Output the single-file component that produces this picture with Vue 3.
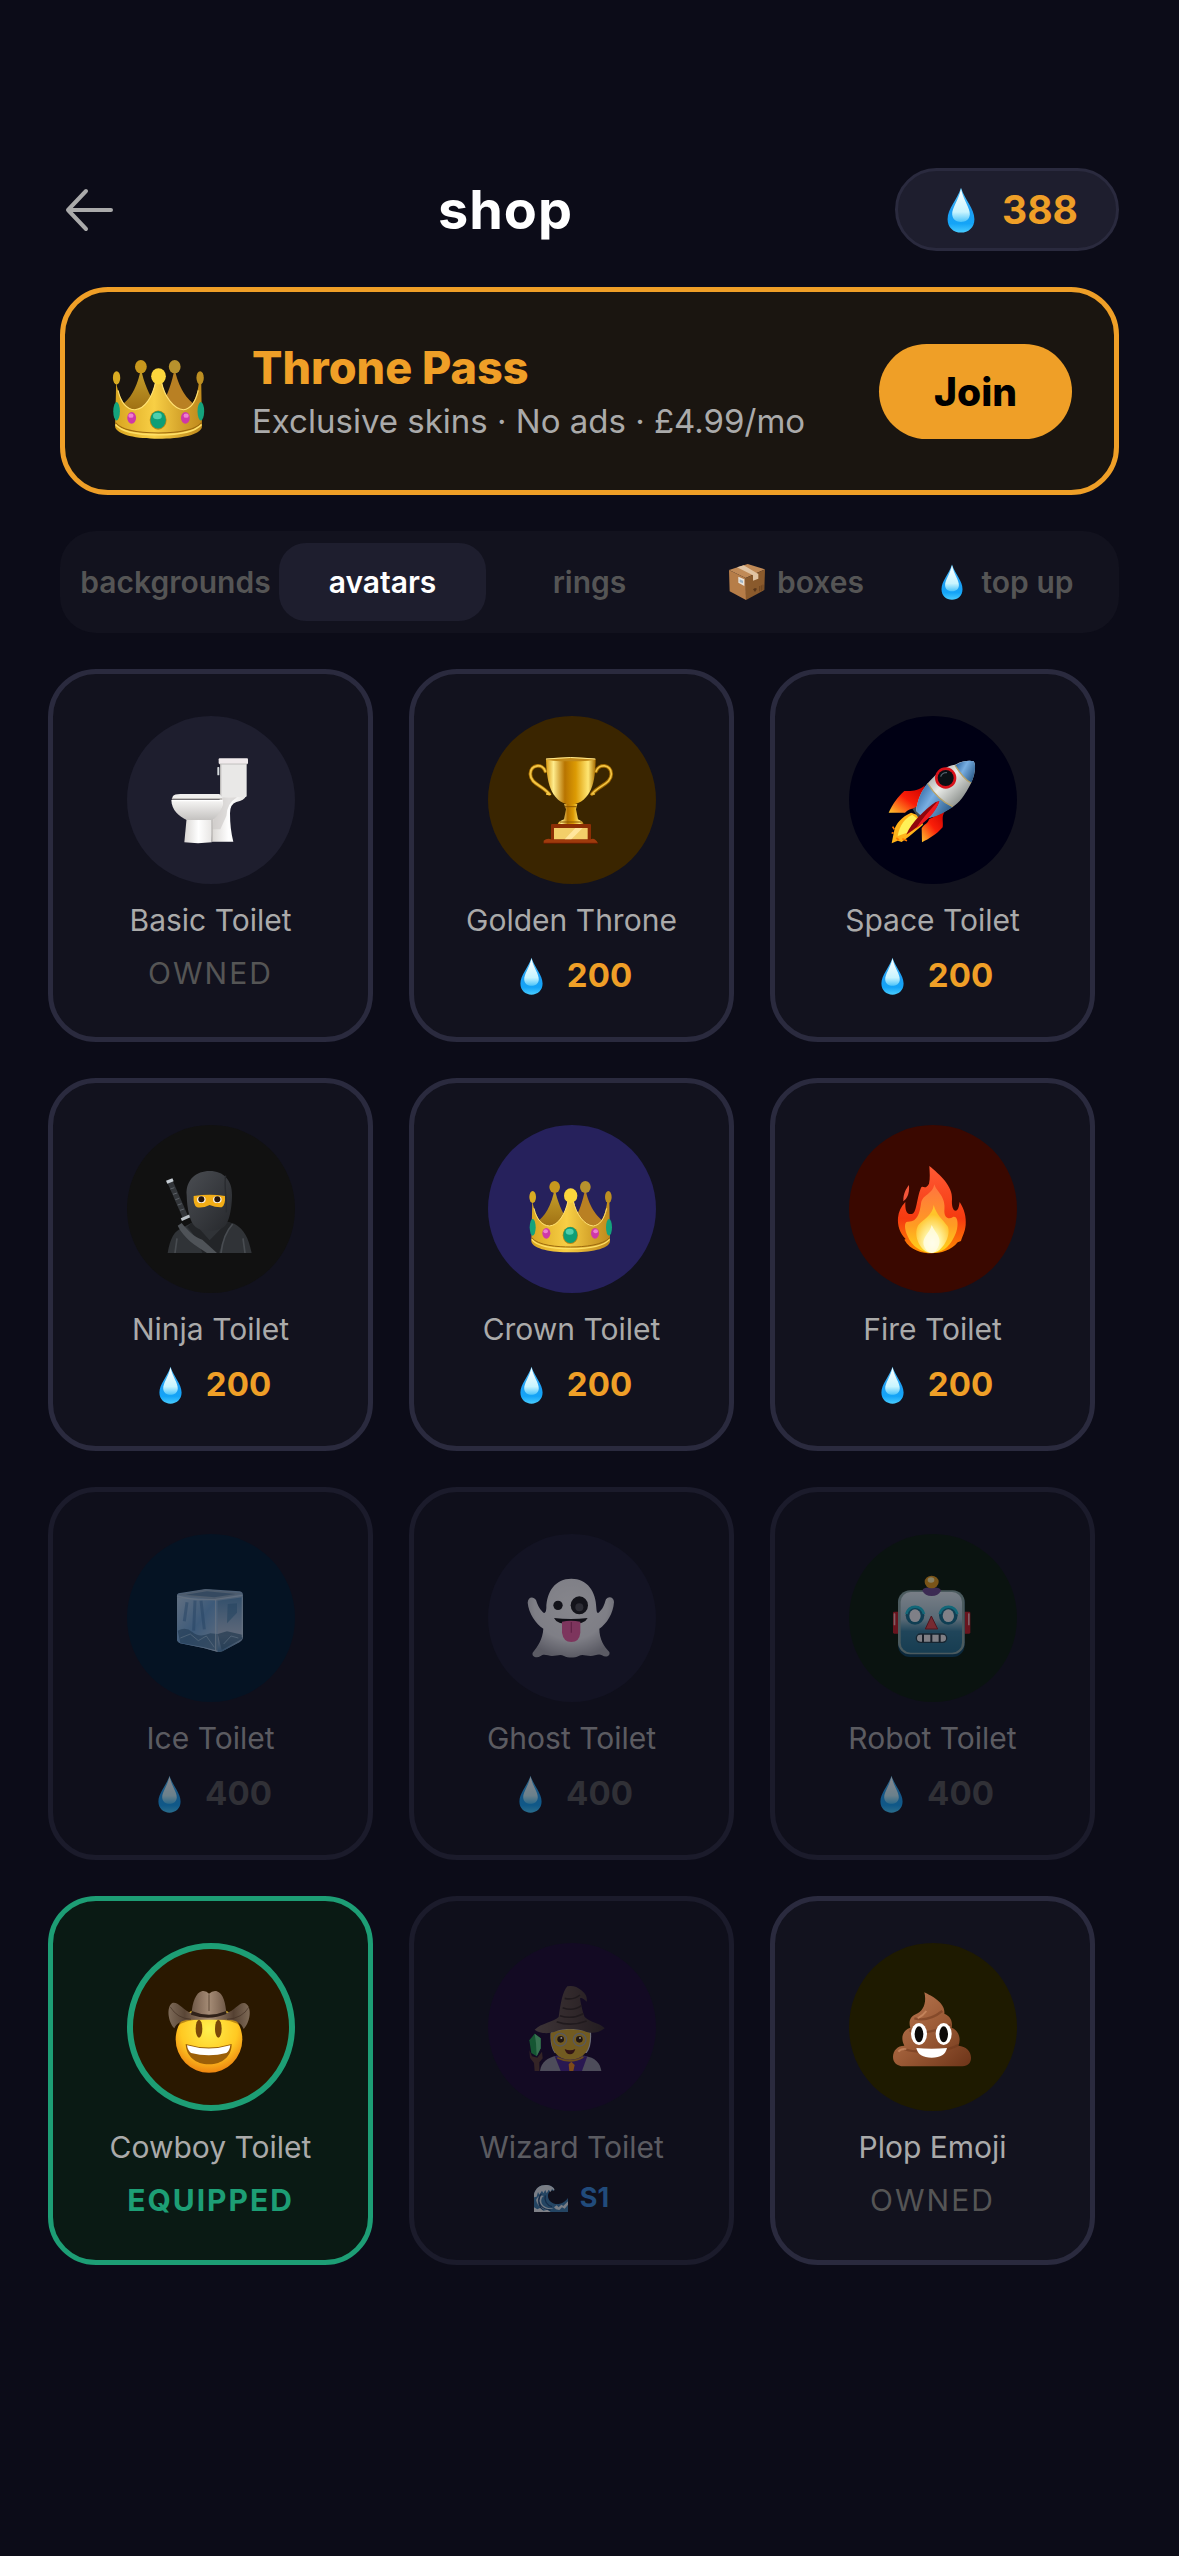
<template>
  <svg class="sprite" width="0" height="0" aria-hidden="true">
    <defs>
      <linearGradient id="gold" x1="0" x2="1" y1="0" y2="0">
        <stop offset="0" stop-color="#d9a520" />
        <stop offset="0.45" stop-color="#f8cf45" />
        <stop offset="0.75" stop-color="#d6a52c" />
        <stop offset="1" stop-color="#c08a1c" />
      </linearGradient>
      <linearGradient id="gold-back" x1="0" x2="0" y1="0" y2="1">
        <stop offset="0" stop-color="#c9a32c" />
        <stop offset="1" stop-color="#96650e" />
      </linearGradient>
      <linearGradient id="cup" x1="0" x2="1" y1="0" y2="0">
        <stop offset="0" stop-color="#d99a12" />
        <stop offset="0.15" stop-color="#ffec8c" />
        <stop offset="0.38" stop-color="#b87400" />
        <stop offset="0.6" stop-color="#dc9b04" />
        <stop offset="0.85" stop-color="#ffe673" />
        <stop offset="1" stop-color="#a86c00" />
      </linearGradient>
      <linearGradient id="china" x1="0" x2="0" y1="0" y2="1">
        <stop offset="0" stop-color="#f7f6f5" />
        <stop offset="1" stop-color="#c4c2c0" />
      </linearGradient>
      <linearGradient id="china-side" x1="0" x2="1" y1="0" y2="0">
        <stop offset="0" stop-color="#d9d6d3" />
        <stop offset="0.5" stop-color="#ffffff" />
        <stop offset="1" stop-color="#e6e4e2" />
      </linearGradient>
      <linearGradient id="hull" x1="0.2" x2="0.8" y1="0.2" y2="0.8">
        <stop offset="0" stop-color="#9a9c9a" />
        <stop offset="0.4" stop-color="#e9ebe8" />
        <stop offset="1" stop-color="#777c78" />
      </linearGradient>
      <linearGradient id="hull-blue" x1="0" x2="1" y1="0.2" y2="0.8">
        <stop offset="0" stop-color="#2c639e" />
        <stop offset="0.4" stop-color="#78aee2" />
        <stop offset="1" stop-color="#255482" />
      </linearGradient>
      <linearGradient id="fin" x1="1" x2="0" y1="0" y2="1">
        <stop offset="0" stop-color="#c80000" />
        <stop offset="0.5" stop-color="#fa1e08" />
        <stop offset="1" stop-color="#ffc62e" />
      </linearGradient>
      <linearGradient id="hood" x1="0" x2="1" y1="0" y2="1">
        <stop offset="0" stop-color="#4a4d52" />
        <stop offset="1" stop-color="#26282c" />
      </linearGradient>
      <linearGradient id="fire-outer" x1="0" x2="0" y1="0" y2="1">
        <stop offset="0" stop-color="#ff5a35" />
        <stop offset="0.6" stop-color="#f53a10" />
        <stop offset="1" stop-color="#ff8c00" />
      </linearGradient>
      <linearGradient id="fire-mid" x1="0" x2="0" y1="0" y2="1">
        <stop offset="0" stop-color="#ff7440" />
        <stop offset="0.6" stop-color="#ff9c22" />
        <stop offset="1" stop-color="#ffd61a" />
      </linearGradient>
      <radialGradient id="fire-core" cx="0.5" cy="0.8" r="0.6">
        <stop offset="0" stop-color="#ffffff" />
        <stop offset="0.4" stop-color="#fff6a8" />
        <stop offset="1" stop-color="#ffc42a" />
      </radialGradient>
      <linearGradient id="ice-left" x1="0" x2="1" y1="0" y2="1">
        <stop offset="0" stop-color="#b4d2ea" />
        <stop offset="0.5" stop-color="#6ea7da" />
        <stop offset="1" stop-color="#b8d0e6" />
      </linearGradient>
      <linearGradient id="ice-right" x1="0" x2="0" y1="0" y2="1">
        <stop offset="0" stop-color="#5b93bf" />
        <stop offset="0.7" stop-color="#b2c6dc" />
        <stop offset="1" stop-color="#4b83ae" />
      </linearGradient>
      <radialGradient id="sheet" cx="0.5" cy="0.35" r="0.65">
        <stop offset="0" stop-color="#ffffff" />
        <stop offset="0.65" stop-color="#f1f1f4" />
        <stop offset="1" stop-color="#a9a9b0" />
      </radialGradient>
      <linearGradient id="steel" x1="0" x2="0" y1="0" y2="1">
        <stop offset="0" stop-color="#e4f0f4" />
        <stop offset="0.45" stop-color="#a5c5d0" />
        <stop offset="0.65" stop-color="#347f9c" />
        <stop offset="1" stop-color="#236f8c" />
      </linearGradient>
      <radialGradient id="smiley" cx="0.5" cy="0.35" r="0.65">
        <stop offset="0" stop-color="#fff04e" />
        <stop offset="0.65" stop-color="#ffc922" />
        <stop offset="1" stop-color="#ee8510" />
      </radialGradient>
      <linearGradient id="felt" x1="0" x2="1" y1="0" y2="0">
        <stop offset="0" stop-color="#7d6a58" />
        <stop offset="0.2" stop-color="#5a4636" />
        <stop offset="0.4" stop-color="#8d7460" />
        <stop offset="0.5" stop-color="#a58c76" />
        <stop offset="0.6" stop-color="#8d7460" />
        <stop offset="0.8" stop-color="#554132" />
        <stop offset="1" stop-color="#7f6b57" />
      </linearGradient>
      <linearGradient id="witch-hat" x1="0" x2="1" y1="0" y2="0">
        <stop offset="0" stop-color="#6e5c56" />
        <stop offset="0.5" stop-color="#58463f" />
        <stop offset="1" stop-color="#3a2d2a" />
      </linearGradient>
      <linearGradient id="mud" x1="0" x2="1" y1="0" y2="1">
        <stop offset="0" stop-color="#bd7c56" />
        <stop offset="0.5" stop-color="#9c5b36" />
        <stop offset="1" stop-color="#6c3418" />
      </linearGradient>
      <linearGradient id="drop-rim" x1="0" x2="0" y1="0" y2="1">
        <stop offset="0" stop-color="#5cc8fb" />
        <stop offset="0.5" stop-color="#1c9df3" />
        <stop offset="0.8" stop-color="#14a4f7" />
        <stop offset="1" stop-color="#48ccff" />
      </linearGradient>
      <linearGradient id="drop-shine" x1="0" x2="0" y1="0" y2="1">
        <stop offset="0" stop-color="#ffffff" />
        <stop offset="0.7" stop-color="#c8f4fe" />
        <stop offset="1" stop-color="#4cc4fa" />
      </linearGradient>
    </defs>

    <symbol id="drop" viewBox="0 0 72 120">
      <path d="M36 2C46 34 71 56 71 84C71 106 55 119 36 119C17 119 1 106 1 84C1 56 26 34 36 2Z" fill="url(#drop-rim)" />
      <path d="M36 5C43 36 60 54 59 72C58 86 47 91 36 91C25 91 14 86 13 72C12 54 29 36 36 5Z" fill="url(#drop-shine)" />
    </symbol>

    <symbol id="box" viewBox="0 0 108 108">
      <path d="M0 18L56 0L108 16L50 42Z" fill="#c08a57" />
      <path d="M0 18L50 42L51 108L2 82Z" fill="#b67d48" />
      <path d="M50 42L108 16L106 78L51 108Z" fill="#8a5a2c" />
      <path d="M24 10L44 4L88 30L88 44L72 50L72 34Z" fill="#e0c4a4" />
      <path d="M28 38L46 46V66L28 56Z" fill="#e9e4dc" />
      <path d="M32 46L42 50V58L32 54Z" fill="#9fb4c4" />
      <path d="M72 76L78 72L84 74L78 84Z" fill="#59361a" />
      <path d="M92 66V82M97 64V80M102 62V78" stroke="#5f3b1b" stroke-width="2" />
    </symbol>

    <symbol id="wave" viewBox="0 0 102 84">
      <path d="M0 30C6 10 22 0 44 4C58 8 64 16 60 20C50 18 42 24 42 36C42 52 58 62 74 60C88 58 96 50 102 42V84H0Z" fill="#3d7fae" />
      <path d="M0 30C6 10 22 0 44 4C58 8 64 16 60 20L54 15L50 24L44 17L38 28L34 18L28 28L24 20L16 32L12 24L8 38L0 40Z" fill="#e8f0f4" />
      <path d="M6 48C12 34 22 32 30 36C22 40 20 50 24 60C30 70 44 74 58 72C40 82 14 78 6 48Z" fill="#d8e6ee" />
      <path d="M14 44C14 60 24 76 50 78M22 30C12 40 10 62 26 78M34 34C30 50 38 64 54 68" fill="none" stroke="#1f4c78" stroke-width="4" />
      <path d="M60 70L68 64L74 70L82 62L88 66L102 52V62L92 74L84 70L76 78L66 76Z" fill="#e8f0f4" />
      <path d="M0 70L10 76L18 72L28 80L40 77L50 84H0Z" fill="#f2f6f8" />
    </symbol>

    <symbol id="crown" viewBox="108 108 288 288">
      <path d="M200 190C192 240 168 280 146 290V330H240V290C222 260 208 230 200 190Z" fill="url(#gold-back)" />
      <path d="M292 190C300 240 328 280 350 290V330H256V290C274 260 284 230 292 190Z" fill="#b98023" />
      <ellipse cx="200" cy="186" rx="16" ry="18" fill="#c7971d" />
      <ellipse cx="292" cy="186" rx="16" ry="18" fill="#b8922d" />
      <path d="M133 226C138 266 156 300 184 303C214 300 236 258 240 222H256C260 258 286 300 316 303C342 298 354 264 358 226H364L366 350C362 372 306 382 248 382C190 382 136 372 130 350Z" fill="url(#gold)" />
      <path d="M138 250C146 284 162 302 184 303C212 301 232 266 240 228M256 228C264 266 288 301 316 303C336 300 348 284 356 250" fill="none" stroke="#ffe173" stroke-width="3" />
      <ellipse cx="134" cy="216" rx="10" ry="18" fill="#d9ab22" />
      <ellipse cx="361" cy="216" rx="10" ry="18" fill="#bd8f22" />
      <ellipse cx="248" cy="212" rx="20" ry="22" fill="#fbd63c" />
      <path d="M131 338C150 362 210 366 248 366C290 366 346 360 365 338" fill="none" stroke="#9d6a0e" stroke-width="3" />
      <path d="M131 343C150 367 210 371 248 371C290 371 346 365 365 343" fill="none" stroke="#ffe067" stroke-width="4" />
      <ellipse cx="247" cy="331" rx="23" ry="26" fill="#b98816" />
      <ellipse cx="247" cy="330" rx="21" ry="24" fill="#0f9e76" />
      <ellipse cx="245" cy="320" rx="12" ry="9" fill="#4fd0ac" />
      <ellipse cx="175" cy="325" rx="12" ry="16" fill="#cf38a8" />
      <ellipse cx="173" cy="319" rx="7" ry="6" fill="#ee80d0" />
      <ellipse cx="321" cy="325" rx="12" ry="16" fill="#cf38a8" />
      <ellipse cx="323" cy="319" rx="7" ry="6" fill="#ee80d0" />
      <ellipse cx="134" cy="307" rx="9" ry="25" fill="#14a37c" />
      <ellipse cx="363" cy="307" rx="9" ry="25" fill="#14a37c" />
    </symbol>

    <symbol id="toilet" viewBox="108 108 288 288">
      <path d="M283 240H357Q352 254 328 258Q309 264 309 292Q309 340 319 377H254V300Z" fill="url(#china-side)" />
      <path d="M262 290Q296 280 286 244H330Q300 262 298 300L280 340H256Z" fill="#c9c6c4" opacity="0.6" />
      <rect x="279" y="140" width="80" height="103" rx="4" fill="#e9e8e7" />
      <path d="M281 145V241" stroke="#bdbbb9" stroke-width="4" />
      <rect x="275" y="127" width="88" height="17" rx="3" fill="#f0eaec" />
      <path d="M277 144H361" stroke="#aeacab" stroke-width="2" />
      <rect x="271" y="153" width="6" height="25" rx="2" fill="#d5dadd" />
      <path d="M179 306L172 379Q213 384 254 379L257 306Z" fill="url(#china-side)" />
      <path d="M255 308V378" stroke="#a9a6a4" stroke-width="3" />
      <path d="M133 252C134 284 156 300 179 312H256C276 298 286 280 287 252Z" fill="url(#china)" />
      <path d="M138 240Q142 234 160 234H276Q284 236 284 250H134Z" fill="#f0efee" />
      <path d="M135 249H286" stroke="#99948f" stroke-width="3" />
      <path d="M135 254H286" stroke="#ffffff" stroke-width="4" />
    </symbol>

    <symbol id="trophy" viewBox="108 108 288 288">
      <g fill="none" stroke-linecap="round">
        <path d="M172 166C164 142 128 144 127 174C128 204 160 206 184 234" stroke="#a06a00" stroke-width="11" />
        <path d="M172 166C164 142 128 144 127 174C128 204 160 206 184 234H177" stroke="#f3c544" stroke-width="6" />
        <path d="M324 166C332 142 369 144 370 174C369 204 336 206 312 234" stroke="#a06a00" stroke-width="11" />
        <path d="M324 166C332 142 369 144 370 174C369 204 336 206 312 234H319" stroke="#f3c544" stroke-width="5" />
      </g>
      <path d="M174 130H323C322 180 318 258 248 267C180 258 176 180 174 130Z" fill="url(#cup)" />
      <ellipse cx="248" cy="130" rx="75" ry="6" fill="#c38a18" />
      <path d="M174 129Q248 120 322 129" fill="none" stroke="#ffe98d" stroke-width="3" />
      <path d="M228 264H268L264 280L270 310Q290 318 286 328H210Q206 318 228 310L234 280Z" fill="url(#cup)" />
      <path d="M230 272H266M216 318H280" stroke="#8c5800" stroke-width="3" />
      <rect x="189" y="324" width="120" height="50" rx="3" fill="#8c2e05" />
      <rect x="198" y="336" width="101" height="34" fill="#f3cf69" />
      <path d="M230 370L262 336H284L250 370Z" fill="#ffe69c" />
      <path d="M167 374Q178 364 192 371H306Q320 362 330 382H167Z" fill="#a03a0c" />
      <path d="M167 382H330" stroke="#5f1a02" stroke-width="3" />
    </symbol>

    <symbol id="rocket" viewBox="108 108 288 288">
      <path d="M186 290C158 302 140 324 136 342L128 382L146 374L158 378L182 360L222 326L214 300Z" fill="#ffb31a" />
      <path d="M190 296C168 306 152 326 146 360L174 350L214 316Z" fill="#fff057" />
      <path d="M136 340L131 332M134 352L128 350M160 368L174 374M142 366L150 372" stroke="#ff7a00" stroke-width="5" />
      <path d="M228 208C206 226 186 226 166 225C146 242 130 266 119 290H168C180 278 190 276 204 278Z" fill="url(#fin)" />
      <path d="M288 286C276 302 284 318 281 334C262 356 240 368 219 379L218 337C226 324 238 322 240 310Z" fill="url(#fin)" />
      <path d="M191 280L200 272L222 298L210 308Z" fill="#3b4a55" />
      <path d="M374 136C382 146 378 178 366 202C348 238 330 262 311 273C284 290 256 304 226 308L201 284C206 252 216 226 236 202C264 168 296 148 318 146C336 136 360 132 374 136Z" fill="url(#hull)" />
      <path d="M318 148C336 136 360 132 374 136C382 146 378 178 366 201C348 192 332 170 318 148Z" fill="url(#hull-blue)" />
      <path d="M236 202C254 232 280 258 311 272C284 292 256 304 226 308L201 284C206 252 216 226 236 202Z" fill="url(#hull-blue)" />
      <path d="M236 202C254 232 280 258 311 272M318 148C332 170 348 192 366 201" fill="none" stroke="#b7a36a" stroke-width="4" />
      <circle cx="290" cy="186" r="32" fill="#d8121a" />
      <circle cx="290" cy="186" r="24" fill="#0a0f14" />
      <path d="M275 182A17 17 0 0 1 294 170" fill="none" stroke="#52606b" stroke-width="4" />
      <path d="M271 256C262 286 226 322 172 356C186 320 228 280 260 258Z" fill="#90060c" />
      <path d="M271 256C262 286 236 314 200 338C216 312 240 286 264 258Z" fill="#ee1a1f" />
    </symbol>

    <symbol id="ninja" viewBox="108 108 288 288">
      <path d="M129 170L176 278" stroke="#33363a" stroke-width="17" />
      <path d="M130 192L142 188M138 208L150 204M145 224L157 220M152 240L164 236M159 256L171 252" stroke="#5d6268" stroke-width="3" />
      <path d="M119 172L138 164" stroke="#c7ced4" stroke-width="10" />
      <path d="M163 284L190 272" stroke="#b7bec4" stroke-width="9" />
      <path d="M122 384C130 340 140 318 170 306L200 290H300L322 296C352 314 364 336 374 384Z" fill="#303337" />
      <path d="M198 290L248 346L302 290L316 296C300 320 286 350 276 384H226C214 350 196 320 180 306Z" fill="#232528" />
      <path d="M179 210C176 164 208 138 248 138C290 138 316 166 315 210C315 250 306 296 290 306C268 322 226 322 206 306C188 292 180 250 179 210Z" fill="url(#hood)" />
      <path d="M200 213Q248 206 294 213Q296 240 284 247Q266 248 248 240Q228 250 210 247Q198 240 200 213Z" fill="#f2ad16" />
      <ellipse cx="223" cy="224" rx="13" ry="10" fill="#f8efe0" />
      <ellipse cx="271" cy="224" rx="13" ry="10" fill="#f8efe0" />
      <circle cx="223" cy="223" r="9" fill="#26150a" />
      <circle cx="271" cy="223" r="9" fill="#26150a" />
      <path d="M296 152C290 178 300 220 298 262" fill="none" stroke="#292b2f" stroke-width="4" />
      <path d="M152 302L164 294C184 318 200 336 226 344L270 384H240C206 362 172 342 152 302Z" fill="#4f5358" />
      <path d="M317 297C298 318 286 348 282 384M150 340L144 384M348 340L354 384" fill="none" stroke="#484c51" stroke-width="5" />
    </symbol>

    <symbol id="fire" viewBox="108 108 288 288">
      <path d="M180 180C172 190 162 206 163 229C172 222 182 210 180 180Z" fill="#f4553a" />
      <path d="M241 123C272 148 312 184 309 222C307 246 314 262 324 256C330 250 330 240 332 231C346 252 352 276 350 300C348 322 340 334 336 348L326 352C308 376 274 385 248 385C220 385 184 376 166 344L170 342C152 324 145 300 147 278C149 260 156 244 169 231C168 254 172 270 188 267C204 264 202 222 216 188C220 180 230 196 240 176C244 160 242 142 241 123Z" fill="url(#fire-outer)" />
      <path d="M256 178C262 200 292 214 286 258C286 280 300 284 312 276C330 270 330 314 314 338C300 368 276 384 248 384C218 384 188 364 176 334C166 312 164 288 178 290C206 290 212 262 216 236C220 208 250 210 256 178Z" fill="url(#fire-mid)" />
      <path d="M254 240C262 270 282 284 296 304C308 328 282 384 248 384C214 384 190 330 208 300C222 284 252 270 254 240Z" fill="url(#fire-core)" />
      <path d="M248 300C260 326 278 336 270 360Q262 382 248 384Q230 380 224 360C218 336 242 326 248 300Z" fill="#fffde6" opacity="0.8" />
    </symbol>

    <symbol id="ice" viewBox="108 108 288 288">
      <path d="M150 182Q152 176 164 176L236 165L338 172Q348 174 348 184L348 312Q346 320 338 324L286 352Q276 356 266 352L230 342L160 328Q150 324 150 316Z" fill="#8fb4d4" />
      <path d="M150 190L272 200V354L230 342L160 328Q150 324 150 316Z" fill="url(#ice-left)" />
      <path d="M272 200L347 190V312Q346 320 338 324L286 352L272 354Z" fill="url(#ice-right)" />
      <path d="M152 182L236 166L346 178L272 198Z" fill="#8fabc2" />
      <path d="M176 182L240 172L326 180L262 190Z" fill="#5f87a8" />
      <path d="M204 200L200 290M222 200L232 286M180 205L172 262" stroke="#3f79ae" stroke-width="9" opacity="0.5" />
      <path d="M302 210L300 268L330 236V208Z" fill="#3f7da8" opacity="0.6" />
      <path d="M152 290Q176 276 196 294T250 298L272 300V350L232 340L160 326Z" fill="#3f7196" opacity="0.7" />
      <path d="M272 300L300 292L346 302V314L284 348Z" fill="#3a6888" opacity="0.7" />
      <path d="M160 312L190 300L214 320L238 306L262 340M290 330L312 306L334 312" fill="none" stroke="#a8cbe4" stroke-width="3" opacity="0.7" />
      <path d="M150 186Q200 200 266 196L346 184M266 198V350M346 190V310" fill="none" stroke="#cfe2f0" stroke-width="4" opacity="0.6" />
    </symbol>

    <symbol id="ghost" viewBox="108 108 288 288">
      <path d="M250 134C298 134 324 172 325 222C326 236 328 240 334 234C348 222 350 206 354 196C362 184 378 190 378 204C376 238 356 270 334 284C334 316 348 336 364 354C368 366 354 372 342 364C332 358 320 366 308 366C292 366 284 360 272 366C260 372 240 372 228 366C216 360 208 366 192 366C180 366 168 358 158 366C146 374 130 368 134 356C150 336 164 316 166 284C144 270 122 238 119 206C120 188 136 186 144 198C148 210 152 222 164 234C170 240 174 236 175 222C176 172 202 134 250 134Z" fill="url(#sheet)" />
      <ellipse cx="210" cy="214" rx="14" ry="14" fill="#1a1a1c" />
      <ellipse cx="274" cy="214" rx="26" ry="27" fill="#1a1a1c" />
      <ellipse cx="274" cy="220" rx="12" ry="12" fill="#4c4c50" />
      <path d="M198 252Q248 258 299 252Q290 271 248 271Q206 271 198 252Z" fill="#151517" />
      <path d="M222 263Q248 258 277 263V296Q274 324 250 324Q226 324 222 296Z" fill="#ee5fa2" />
      <path d="M250 264V296" stroke="#b83a78" stroke-width="4" />
    </symbol>

    <symbol id="robot" viewBox="108 108 288 288">
      <rect x="132" y="233" width="20" height="66" rx="4" fill="#c41c24" />
      <rect x="344" y="233" width="20" height="66" rx="4" fill="#c41c24" />
      <rect x="134" y="238" width="5" height="36" rx="2" fill="#f2b0b0" />
      <rect x="357" y="238" width="5" height="36" rx="2" fill="#f2b0b0" />
      <rect x="147" y="172" width="200" height="197" rx="36" fill="#0b4560" />
      <rect x="147" y="169" width="200" height="192" rx="36" fill="#8aa8a4" />
      <rect x="155" y="174" width="184" height="182" rx="30" fill="url(#steel)" />
      <path d="M220 170Q222 160 248 160Q274 160 276 170Q268 186 248 186Q228 186 220 170Z" fill="#6d4a8e" />
      <ellipse cx="248" cy="144" rx="21" ry="19" fill="#e89c18" />
      <ellipse cx="246" cy="138" rx="10" ry="8" fill="#fff2ac" />
      <circle cx="198" cy="244" r="28" fill="#13718e" />
      <path d="M172 240A27 27 0 0 1 225 240" fill="none" stroke="#18c2d8" stroke-width="8" />
      <ellipse cx="198" cy="245" rx="17" ry="19" fill="#f1f4f6" />
      <circle cx="298" cy="244" r="28" fill="#13718e" />
      <path d="M272 240A27 27 0 0 1 325 240" fill="none" stroke="#18c2d8" stroke-width="8" />
      <ellipse cx="298" cy="245" rx="17" ry="19" fill="#f1f4f6" />
      <path d="M247 246L266 285H229Z" fill="#e2484a" stroke="#8d2026" stroke-width="3" />
      <rect x="202" y="300" width="91" height="25" rx="12" fill="#f1f1f1" stroke="#1f3f4c" stroke-width="4" />
      <path d="M222 300V325M247 300V325M272 300V325" stroke="#25323a" stroke-width="6" />
    </symbol>

    <symbol id="cowboy" viewBox="108 108 288 288">
      <circle cx="246" cy="289" r="100" fill="url(#smiley)" />
      <path d="M156 246C186 222 306 222 336 246L338 232L246 204L154 232Z" fill="#7a4a08" opacity="0.5" />
      <path d="M142 256C122 236 118 190 136 180C156 176 168 204 194 210C196 180 206 148 226 144Q238 142 246 152Q256 142 268 144C290 150 296 184 298 210C322 204 336 178 352 180C376 186 372 236 350 258C344 240 326 230 300 230H192C168 230 148 240 142 256Z" fill="url(#felt)" />
      <path d="M194 204Q246 226 298 204V213Q246 234 192 215Z" fill="#2f2118" />
      <path d="M246 154V204" fill="none" stroke="#5f4a39" stroke-width="3" />
      <path d="M130 192Q150 226 192 229M366 192Q346 226 300 229" fill="none" stroke="#3d2c20" stroke-width="3" opacity="0.6" />
      <ellipse cx="216" cy="257" rx="10" ry="27" fill="#7a4808" />
      <ellipse cx="274" cy="257" rx="10" ry="27" fill="#7a4808" />
      <path d="M176 303Q246 324 314 303C314 340 286 364 246 364C206 364 178 340 176 303Z" fill="#9b5f08" />
      <path d="M180 307Q246 326 310 307Q308 324 298 330Q246 344 192 330Q182 322 180 307Z" fill="#ffffff" />
    </symbol>

    <symbol id="wizard" viewBox="108 108 288 288">
      <path d="M140 272L158 286V316L146 340L130 330L124 292Z" fill="#1fa04f" />
      <path d="M140 272L144 300L146 340L158 316V286Z" fill="#64d98c" />
      <path d="M124 322L132 340L148 344L162 326L164 346L154 358V384H140L138 360L126 344Z" fill="#5d3c34" />
      <path d="M190 256H308Q314 306 296 330H200Q182 306 190 256Z" fill="#cfcfd6" />
      <path d="M156 384C160 356 178 344 206 338H288C324 344 336 360 340 384Z" fill="#8e8c9c" />
      <path d="M200 340H298L282 384H218Z" fill="#47258a" />
      <path d="M208 344Q248 364 286 342" fill="none" stroke="#c98c20" stroke-width="5" />
      <path d="M242 364L250 356L260 366L256 384H244Z" fill="#f08b1d" />
      <path d="M188 270Q246 248 306 270Q310 348 246 350Q186 348 188 270Z" fill="#d8a92a" />
      <circle cx="217" cy="290" r="19" fill="none" stroke="#a0a4a8" stroke-width="4" />
      <circle cx="275" cy="290" r="19" fill="none" stroke="#a0a4a8" stroke-width="4" />
      <circle cx="218" cy="289" r="10" fill="#35200f" />
      <circle cx="274" cy="289" r="10" fill="#35200f" />
      <circle cx="220" cy="285" r="3" fill="#ffffff" />
      <circle cx="276" cy="285" r="3" fill="#ffffff" />
      <path d="M230 318Q246 326 262 318Q258 334 246 334Q234 334 230 318Z" fill="#5a1f14" />
      <path d="M140 260C160 240 196 238 212 222C218 180 224 146 238 130Q262 126 280 142Q300 158 296 176Q282 162 276 166C280 190 284 208 290 222C310 240 332 238 350 256C330 272 304 272 288 264C260 256 230 256 206 264C184 274 154 272 140 260Z" fill="url(#witch-hat)" />
      <path d="M206 236Q248 252 296 234M230 166Q258 172 276 156M224 194Q256 206 280 188M216 218Q252 230 286 212" fill="none" stroke="#352823" stroke-width="5" />
    </symbol>

    <symbol id="plop" viewBox="108 108 288 288">
      <path d="M226 148C250 160 290 180 286 212C302 218 312 232 308 254C328 262 338 286 328 308C352 310 368 326 366 348C364 364 352 370 334 370H164C144 370 132 358 132 342C132 322 146 308 166 308C154 286 160 262 184 254C178 236 184 220 200 214C222 206 234 180 226 148Z" fill="url(#mud)" />
      <path d="M196 226C230 236 262 218 280 204M182 262C220 276 270 262 306 244M166 318C200 332 296 326 328 306" fill="none" stroke="#70391d" stroke-width="7" opacity="0.55" />
      <path d="M148 326Q156 316 172 318M206 226Q222 218 232 204" fill="none" stroke="#df9f76" stroke-width="6" opacity="0.5" />
      <ellipse cx="210" cy="273" rx="24" ry="33" fill="#ffffff" />
      <ellipse cx="284" cy="273" rx="24" ry="33" fill="#ffffff" />
      <ellipse cx="210" cy="274" rx="13" ry="24" fill="#0c0a09" />
      <ellipse cx="284" cy="274" rx="13" ry="24" fill="#0c0a09" />
      <path d="M202 315Q248 320 294 315Q288 344 248 344Q208 344 202 315Z" fill="#ffffff" />
    </symbol>
  </svg>

  <main class="shop">
    <header class="header">
      <button class="back" type="button" aria-label="Back">
        <svg viewBox="0 0 56 44" width="56" height="44" fill="none" stroke="#aaaaaa" stroke-width="4" stroke-linecap="round" stroke-linejoin="round">
          <path d="M51 22H8M26 3L8 22L26 41" />
        </svg>
      </button>
      <h1 class="heading">shop</h1>
      <div class="balance">
        <svg class="balance-drop" aria-hidden="true"><use href="#drop" /></svg>
        <span>{{ balance }}</span>
      </div>
    </header>

    <section class="pass">
      <svg class="pass-icon" aria-hidden="true"><use href="#crown" /></svg>
      <div class="pass-info">
        <h2 class="pass-title">Throne Pass</h2>
        <p class="pass-text">Exclusive skins · No ads · £4.99/mo</p>
      </div>
      <button class="join" type="button">Join</button>
    </section>

    <nav class="tabs">
      <button
        v-for="tab in tabs"
        :key="tab.label"
        type="button"
        class="tab"
        :class="{ active: tab.label === activeTab }"
        @click="activeTab = tab.label"
      >
        <svg v-if="tab.icon" class="tab-icon" aria-hidden="true"><use :href="'#' + tab.icon" /></svg>
        <span>{{ tab.label }}</span>
      </button>
    </nav>

    <section class="grid">
      <button
        v-for="item in items"
        :key="item.name"
        type="button"
        class="card"
        :class="{ locked: item.locked, equipped: item.status === 'equipped' }"
      >
        <span class="avatar" :style="{ backgroundColor: item.color }">
          <svg class="avatar-icon" aria-hidden="true"><use :href="'#' + item.icon" /></svg>
        </span>
        <span class="name">{{ item.name }}</span>
        <span v-if="item.price" class="price">
          <svg class="price-drop" aria-hidden="true"><use href="#drop" /></svg>
          <span>{{ item.price }}</span>
        </span>
        <span v-else-if="item.season" class="season">
          <svg class="season-icon" aria-hidden="true"><use href="#wave" /></svg>
          <span>{{ item.season }}</span>
        </span>
        <span v-else class="status">{{ item.status.toUpperCase() }}</span>
      </button>
    </section>
  </main>
</template>

<script setup>
import { ref } from 'vue';

const balance = ref(388);
const activeTab = ref('avatars');

const tabs = [
  { label: 'backgrounds' },
  { label: 'avatars' },
  { label: 'rings' },
  { label: 'boxes', icon: 'box' },
  { label: 'top up', icon: 'drop' },
];

const items = [
  { name: 'Basic Toilet', icon: 'toilet', color: '#1e1e2e', status: 'owned' },
  { name: 'Golden Throne', icon: 'trophy', color: '#3a2500', price: 200 },
  { name: 'Space Toilet', icon: 'rocket', color: '#000014', price: 200 },
  { name: 'Ninja Toilet', icon: 'ninja', color: '#111111', price: 200 },
  { name: 'Crown Toilet', icon: 'crown', color: '#26215c', price: 200 },
  { name: 'Fire Toilet', icon: 'fire', color: '#3a0800', price: 200 },
  { name: 'Ice Toilet', icon: 'ice', color: '#001a2e', price: 400, locked: true },
  { name: 'Ghost Toilet', icon: 'ghost', color: '#1a1a2e', price: 400, locked: true },
  { name: 'Robot Toilet', icon: 'robot', color: '#0a1a0a', price: 400, locked: true },
  { name: 'Cowboy Toilet', icon: 'cowboy', color: '#2a1800', status: 'equipped' },
  { name: 'Wizard Toilet', icon: 'wizard', color: '#1a0a2e', season: 'S1', locked: true },
  { name: 'Plop Emoji', icon: 'plop', color: '#1e1a00', status: 'owned' },
];
</script>

<style>
body {
  background-color: #0c0c18;
}
</style>

<style scoped>
.sprite {
  display: block;
}

.shop {
  min-height: 100vh;
  box-sizing: border-box;
  padding: 168px 0 96px;
  display: flex;
  flex-direction: column;
  gap: 36px;
  background-color: #0c0c18;
  color: #ffffff;
  font-family: Inter, "Liberation Sans", sans-serif;
}

button {
  margin: 0;
  padding: 0;
  border: none;
  background: none;
  color: inherit;
  font-family: inherit;
  cursor: pointer;
}

.header {
  margin: 0 60px;
  display: flex;
  align-items: center;
  justify-content: space-between;
}

.back {
  display: flex;
}

.heading {
  margin: 0;
  font-size: 54px;
  line-height: 66px;
  font-weight: 700;
  letter-spacing: 1px;
}

.balance {
  display: flex;
  align-items: center;
  gap: 27px;
  padding: 15px 38px 15px 49px;
  border: 3px solid #2a2a3e;
  border-radius: 42px;
  background-color: #1e1e2e;
  color: #ef9f27;
  font-size: 39px;
  line-height: 47px;
  font-weight: 700;
}

.balance-drop {
  width: 28px;
  height: 46px;
}

.pass {
  margin: 0 60px;
  box-sizing: border-box;
  min-height: 208px;
  padding: 42px;
  display: flex;
  align-items: center;
  gap: 39px;
  border: 5px solid #ef9f27;
  border-radius: 48px;
  background-color: #1a1510;
}

.pass-icon {
  width: 106px;
  height: 106px;
}

.pass-info {
  flex: 1;
}

.pass-title {
  margin: 0;
  color: #ef9f27;
  font-size: 45px;
  line-height: 54px;
  font-weight: 800;
}

.pass-text {
  margin: 6px 0 0;
  color: #aaaaaa;
  font-size: 33px;
  line-height: 40px;
}

.join {
  padding: 24px 55px;
  border-radius: 48px;
  background-color: #ef9f27;
  color: #000000;
  font-size: 39px;
  line-height: 47px;
  font-weight: 800;
}

.tabs {
  margin: 0 60px;
  padding: 12px;
  display: flex;
  border-radius: 36px;
  background-color: #12121e;
}

.tab {
  flex: 1 1 0;
  min-width: 0;
  padding: 21px 0;
  display: flex;
  align-items: center;
  justify-content: center;
  gap: 12px;
  border-radius: 27px;
  color: #555555;
  font-size: 30px;
  line-height: 36px;
  font-weight: 600;
  white-space: nowrap;
}

.tab.active {
  background-color: #1e1e2e;
  color: #ffffff;
}

.tab-icon {
  width: 36px;
  height: 36px;
}

.grid {
  padding: 0 84px 0 48px;
  display: grid;
  grid-template-columns: repeat(3, 1fr);
  gap: 36px;
}

.card {
  padding: 42px 12px;
  display: flex;
  flex-direction: column;
  align-items: center;
  gap: 18px;
  border: 5px solid #2a2a3e;
  border-radius: 48px;
  background-color: #12121e;
}

.card.locked {
  opacity: 0.5;
}

.card.equipped {
  border-color: #1d9e75;
  background-color: #0a1a14;
}

.avatar {
  width: 168px;
  height: 168px;
  box-sizing: border-box;
  display: flex;
  align-items: center;
  justify-content: center;
  border-radius: 50%;
}

.equipped .avatar {
  border: 6px solid #1d9e75;
}

.avatar-icon {
  width: 96px;
  height: 96px;
}

.name {
  color: #aaaaaa;
  font-size: 30px;
  line-height: 36px;
}

.status {
  color: #555555;
  font-size: 30px;
  line-height: 35px;
  letter-spacing: 2px;
}

.equipped .status {
  color: #1d9e75;
  font-weight: 700;
}

.price {
  padding-left: 9px;
  display: flex;
  align-items: center;
  gap: 24px;
  color: #ef9f27;
  font-size: 33px;
  line-height: 39px;
  font-weight: 700;
}

.locked .price {
  color: #555555;
}

.price-drop {
  width: 23px;
  height: 38px;
}

.season {
  display: flex;
  align-items: center;
  gap: 12px;
  color: #378add;
  font-size: 27px;
  line-height: 30px;
  font-weight: 700;
}

.season-icon {
  width: 34px;
  height: 28px;
}
</style>
